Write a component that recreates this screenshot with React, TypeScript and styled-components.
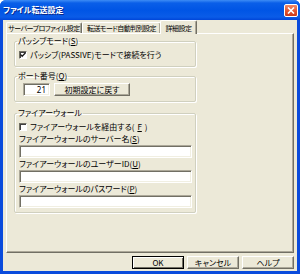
import styled, { createGlobalStyle } from "styled-components";

const GlobalStyle = createGlobalStyle`
  html, body {
    margin: 0;
    padding: 0;
    background: #ffffff;
  }
  body {
    font-family: "Noto Sans CJK JP", "Noto Sans", sans-serif;
  }
`;

const Window = styled.div`
  width: 300px;
  height: 274px;
  display: flex;
  flex-direction: column;
  background: #0a4bdc;
  border-radius: 6px 6px 0 0;
  overflow: hidden;
  box-sizing: border-box;
`;

const TitleBar = styled.div`
  height: 20px;
  flex: none;
  display: flex;
  align-items: center;
  justify-content: space-between;
  padding: 0 2px 0 3px;
  background: linear-gradient(
    to bottom,
    #3d8cf5 0px,
    #0a5fe8 3px,
    #0055e5 10px,
    #0a5ce8 17px,
    #0045d8 20px
  );
`;

const Title = styled.span`
  color: #ffffff;
  font-size: 8px;
  font-weight: bold;
  line-height: 10px;
  text-shadow: 1px 1px 0 #0a2a8a;
  font-feature-settings: "palt";
`;

const CloseButton = styled.div`
  width: 12px;
  height: 11px;
  border: 1px solid #ffffff;
  border-radius: 2px;
  background: linear-gradient(to bottom, #f08a68, #e2502a 60%, #c9391a);
  display: flex;
  align-items: center;
  justify-content: center;
`;

const Body = styled.div`
  flex: 1;
  display: flex;
  flex-direction: column;
  margin: 0 3px 3px;
  padding: 0 3px 2px;
  background: #ece9d8;
`;

const TabList = styled.div`
  height: 13px;
  display: flex;
  align-items: flex-end;
  flex: none;
`;

const Tab = styled.div<{ $active?: boolean; $w: number }>`
  position: relative;
  z-index: ${(p) => (p.$active ? 2 : 1)};
  box-sizing: border-box;
  height: ${(p) => (p.$active ? "14px" : "11px")};
  margin: ${(p) => (p.$active ? "0 -1px -1px -1px" : "0")};
  width: ${(p) => p.$w}px;
  padding-top: ${(p) => (p.$active ? "1px" : "0")};
  display: flex;
  align-items: center;
  justify-content: center;
  font-size: 7px;
  letter-spacing: -0.55px;
  line-height: 10px;
  color: #000;
  background: #ece9d8;
  border-top: 1px solid #ffffff;
  border-left: 1px solid #ffffff;
  border-right: 1px solid #716f64;
  box-shadow: inset -1px 0 0 #aca899;
  border-radius: 2px 2px 0 0;
  font-feature-settings: "palt";
  white-space: nowrap;
`;

const Panel = styled.div`
  height: 220px;
  flex: none;
  box-sizing: border-box;
  border-top: 1px solid #ffffff;
  border-left: 1px solid #ffffff;
  border-right: 1px solid #716f64;
  border-bottom: 1px solid #716f64;
  box-shadow: inset -1px -1px 0 #aca899;
  padding: 2px 7px 0;
  display: flex;
  flex-direction: column;
  align-items: flex-start;
`;

const Group = styled.fieldset<{ $gap: number; $pad: string }>`
  width: 182px;
  box-sizing: border-box;
  margin: ${(p) => p.$gap}px 0 0 0;
  padding: ${(p) => p.$pad};
  border: 1px solid #d0d0bf;
  border-radius: 2px;
  box-shadow: 1px 1px 0 #ffffff, inset 1px 1px 0 #ffffff;
  min-width: 0;
  display: flex;
  flex-direction: column;
`;

const Legend = styled.legend`
  font-size: 8px;
  line-height: 10px;
  padding: 0 1px;
  margin-left: -2px;
  color: #000;
  font-feature-settings: "palt";
`;

const CheckRow = styled.label<{ $h: number }>`
  display: flex;
  align-items: center;
  gap: 3px;
  height: ${(p) => p.$h}px;
  font-size: 8px;
  line-height: 10px;
  color: #000;
  font-feature-settings: "palt";
  white-space: nowrap;
`;

const CheckBox = styled.span`
  width: 8px;
  height: 8px;
  box-sizing: border-box;
  flex: none;
  background: #ffffff;
  border: 1px solid;
  border-color: #716f64 #ffffff #ffffff #716f64;
  box-shadow: inset 1px 1px 0 #404040;
  display: flex;
  align-items: center;
  justify-content: center;
`;

const PortRow = styled.div`
  display: flex;
  align-items: center;
  gap: 4px;
  padding-left: 4px;
`;

const TextInput = styled.div<{ $w?: number; $right?: boolean }>`
  box-sizing: border-box;
  width: ${(p) => (p.$w ? `${p.$w}px` : "100%")};
  height: 13px;
  background: #ffffff;
  border: 1px solid;
  border-color: #aca899 #ffffff #ffffff #aca899;
  box-shadow: inset 1px 1px 0 #716f64, inset -1px -1px 0 #f1efe2;
  font-size: 8px;
  line-height: 11px;
  padding: 0 3px;
  text-align: ${(p) => (p.$right ? "right" : "left")};
  color: #000;
  font-family: "Noto Sans", sans-serif;
`;

const Button = styled.div<{ $w: number; $default?: boolean }>`
  box-sizing: border-box;
  width: ${(p) => p.$w}px;
  height: 13px;
  display: flex;
  align-items: center;
  justify-content: center;
  background: #ece9d8;
  font-size: 8px;
  line-height: 10px;
  color: #000;
  font-feature-settings: "palt";
  border: 1px solid;
  border-color: ${(p) =>
    p.$default ? "#000000" : "#ffffff #716f64 #716f64 #ffffff"};
  box-shadow: ${(p) =>
    p.$default
      ? "inset 1px 1px 0 #ffffff, inset -1px -1px 0 #716f64"
      : "inset -1px -1px 0 #aca899"};
`;

const FieldLabel = styled.div`
  font-size: 8px;
  line-height: 12px;
  height: 12px;
  color: #000;
  font-feature-settings: "palt";
  white-space: nowrap;
`;

const ButtonRow = styled.div`
  display: flex;
  justify-content: flex-end;
  gap: 3px;
  margin-top: 3px;
`;

function Check() {
  return (
    <svg width="6" height="6" viewBox="0 0 6 6">
      <path d="M0.5 2.5 L2.2 4.3 L5.5 0.8" fill="none" stroke="#1e1e1e" strokeWidth="1.3" />
    </svg>
  );
}

export default function App() {
  return (
    <>
      <GlobalStyle />
      <Window>
        <TitleBar>
          <Title>ファイル転送設定</Title>
          <CloseButton>
            <svg width="8" height="7" viewBox="0 0 8 7">
              <path d="M1 0.5 L7 6.5 M7 0.5 L1 6.5" stroke="#ffffff" strokeWidth="1.6" />
            </svg>
          </CloseButton>
        </TitleBar>
        <Body>
          <TabList>
            <Tab $w={76}>サーバープロファイル設定</Tab>
            <Tab $w={79}>転送モード自動判別設定</Tab>
            <Tab $w={37} $active>
              詳細設定
            </Tab>
          </TabList>
          <Panel>
            <Group $gap={0} $pad="4px 3px 6px 4px">
              <Legend>
                パッシブモード(<u>S</u>)
              </Legend>
              <CheckRow $h={10}>
                <CheckBox>
                  <Check />
                </CheckBox>
                パッシブ(PASSIVE)モードで接続を行う
              </CheckRow>
            </Group>
            <Group $gap={4} $pad="2px 3px 5px 4px">
              <Legend>
                ポート番号(<u>Q</u>)
              </Legend>
              <PortRow>
                <TextInput $w={27} $right>
                  21
                </TextInput>
                <Button $w={76}>初期設定に戻す</Button>
              </PortRow>
            </Group>
            <Group $gap={6} $pad="3px 3px 4px 4px">
              <Legend>ファイアーウォール</Legend>
              <CheckRow $h={12}>
                <CheckBox />
                ファイアーウォールを経由する(<u>F</u>)
              </CheckRow>
              <FieldLabel>
                ファイアーウォールのサーバー名(<u>S</u>)
              </FieldLabel>
              <TextInput />
              <FieldLabel>
                ファイアーウォールのユーザーID(<u>U</u>)
              </FieldLabel>
              <TextInput />
              <FieldLabel>
                ファイアーウォールのパスワード(<u>P</u>)
              </FieldLabel>
              <TextInput />
            </Group>
          </Panel>
          <ButtonRow>
            <Button $w={52} $default>
              OK
            </Button>
            <Button $w={52}>キャンセル</Button>
            <Button $w={52}>ヘルプ</Button>
          </ButtonRow>
        </Body>
      </Window>
    </>
  );
}
